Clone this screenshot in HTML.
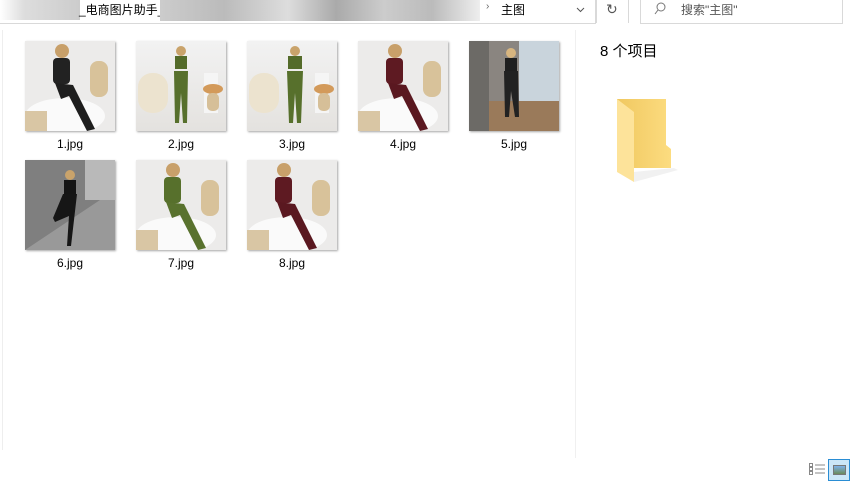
<!DOCTYPE html>
<html><head><meta charset="utf-8"><style>
*{margin:0;padding:0;box-sizing:border-box}
body{width:856px;height:482px;background:#fff;position:relative;overflow:hidden;font-family:"Liberation Sans","Noto Sans CJK SC",sans-serif;font-size:12px;color:#000}
.abs{position:absolute}
.t{position:absolute;width:90px;height:90px;box-shadow:1px 1px 2px rgba(0,0,0,.35);overflow:hidden}
.l{position:absolute;width:90px;text-align:center;font-size:12px}
</style></head><body>
<div class="abs" style="left:-1px;top:-1px;width:597px;height:25px;border:1px solid #d9d9d9"></div>
<div class="abs" style="left:0;top:0;width:80px;height:20px;background:linear-gradient(90deg,#fff,#ddd 30%,#ccc)"></div>
<div class="abs" style="left:79px;top:1px;font-size:12px">_电商图片助手_</div>
<div class="abs" style="left:160px;top:0;width:320px;height:21px;background:linear-gradient(90deg,#ccc,#bbb 20%,#ddd 40%,#aaa 55%,#ccc 70%,#bbb 85%,#eee)"></div>
<div class="abs" style="left:486px;top:1px;color:#666;font-size:10px">›</div>
<div class="abs" style="left:501px;top:1px">主图</div>
<svg class="abs" style="left:576px;top:7px" width="9" height="6"><path d="M1 1l3.5 3.5L8 1" fill="none" stroke="#555"/></svg>
<div class="abs" style="left:596px;top:0;width:1px;height:23px;background:#d9d9d9"></div>
<div class="abs" style="left:606px;top:1px;color:#555;font-size:14px">↻</div>
<div class="abs" style="left:628px;top:0;width:1px;height:23px;background:#d9d9d9"></div>
<div class="abs" style="left:640px;top:-1px;width:203px;height:25px;border:1px solid #d9d9d9"></div>
<svg class="abs" style="left:654px;top:2px" width="12" height="14"><circle cx="7" cy="5" r="4" fill="none" stroke="#777"/><path d="M4 8L1 12" stroke="#777"/></svg>
<div class="abs" style="left:681px;top:1px;color:#555">搜索"主图"</div>
<div class="abs" style="left:2px;top:30px;width:1px;height:420px;background:#eee"></div>
<div class="abs" style="left:575px;top:30px;width:1px;height:428px;background:#f0f0f0"></div>

<svg width="0" height="0" style="position:absolute"><defs>
<linearGradient id="w" x1="0" y1="0" x2="0" y2="1"><stop offset="0" stop-color="#f2f2f2"/><stop offset="1" stop-color="#e4e2df"/></linearGradient>
</defs></svg>

<div class="t" style="left:25px;top:41px"><svg width="90" height="90"><rect width="90" height="90" fill="#ecebea"/><rect x="65" y="20" width="18" height="36" rx="8" fill="#d8c29a"/><ellipse cx="40" cy="75" rx="40" ry="18" fill="#fafafa"/><rect x="0" y="70" width="22" height="20" fill="#d9c6a4"/><circle cx="37" cy="10" r="7" fill="#c8a06a"/><rect x="28" y="17" width="17" height="26" rx="4" fill="#222"/><path d="M30 42 L48 44 L70 88 L62 90 L44 55 L36 58Z" fill="#1e1e1e"/></svg></div>
<div class="l" style="left:25px;top:137px">1.jpg</div>
<div class="t" style="left:136px;top:41px"><svg width="90" height="90"><rect width="90" height="90" fill="url(#w)"/><rect x="2" y="32" width="30" height="40" rx="14" fill="#ece3cf"/><rect x="68" y="32" width="14" height="40" fill="#f5f5f5"/><ellipse cx="77" cy="48" rx="10" ry="5" fill="#d39a5a"/><rect x="71" y="52" width="12" height="18" rx="5" fill="#d6bf98"/><circle cx="45" cy="10" r="5" fill="#c9a36b"/><rect x="39" y="15" width="12" height="13" fill="#546b2a"/><path d="M38 30 L52 30 L51 82 L47 82 L45 52 L43 82 L39 82Z" fill="#57702c"/></svg></div>
<div class="l" style="left:136px;top:137px">2.jpg</div>
<div class="t" style="left:247px;top:41px"><svg width="90" height="90"><rect width="90" height="90" fill="url(#w)"/><rect x="2" y="32" width="30" height="40" rx="14" fill="#ece3cf"/><rect x="68" y="32" width="14" height="40" fill="#f5f5f5"/><ellipse cx="77" cy="48" rx="10" ry="5" fill="#d39a5a"/><rect x="71" y="52" width="12" height="18" rx="5" fill="#d6bf98"/><circle cx="48" cy="10" r="5" fill="#c9a36b"/><rect x="41" y="15" width="14" height="13" fill="#546b2a"/><path d="M40 30 L56 30 L54 82 L50 82 L48 52 L46 82 L42 82Z" fill="#57702c"/></svg></div>
<div class="l" style="left:247px;top:137px">3.jpg</div>
<div class="t" style="left:358px;top:41px"><svg width="90" height="90"><rect width="90" height="90" fill="#ecebea"/><rect x="65" y="20" width="18" height="36" rx="8" fill="#d8c29a"/><ellipse cx="40" cy="75" rx="40" ry="18" fill="#fafafa"/><rect x="0" y="70" width="22" height="20" fill="#d9c6a4"/><circle cx="37" cy="10" r="7" fill="#c8a06a"/><rect x="28" y="17" width="17" height="26" rx="4" fill="#5e1a22"/><path d="M30 42 L48 44 L70 88 L62 90 L44 55 L36 58Z" fill="#5a1820"/></svg></div>
<div class="l" style="left:358px;top:137px">4.jpg</div>
<div class="t" style="left:469px;top:41px"><svg width="90" height="90"><rect width="90" height="90" fill="#8a8580"/><rect x="50" y="0" width="40" height="60" fill="#c9d4dc"/><rect x="0" y="60" width="90" height="30" fill="#9a7a5a"/><rect x="0" y="0" width="20" height="90" fill="#6c6a66"/><circle cx="42" cy="12" r="5" fill="#d7b57f"/><rect x="36" y="17" width="12" height="13" fill="#1f1f1f"/><path d="M35 30 L49 30 L50 76 L46 76 L42 50 L40 76 L36 76Z" fill="#222"/></svg></div>
<div class="l" style="left:469px;top:137px">5.jpg</div>
<div class="t" style="left:25px;top:160px"><svg width="90" height="90"><rect width="90" height="90" fill="#7f7f7f"/><path d="M0 90 L90 30 L90 90Z" fill="#999"/><rect x="60" y="0" width="30" height="40" fill="#b9b9b9"/><circle cx="45" cy="15" r="5" fill="#c9a36b"/><rect x="39" y="20" width="12" height="14" fill="#151515"/><path d="M38 34 L52 34 L46 86 L42 86 L44 56 L30 62 L28 58Z" fill="#161616"/></svg></div>
<div class="l" style="left:25px;top:256px">6.jpg</div>
<div class="t" style="left:136px;top:160px"><svg width="90" height="90"><rect width="90" height="90" fill="#ecebea"/><rect x="65" y="20" width="18" height="36" rx="8" fill="#d8c29a"/><ellipse cx="40" cy="75" rx="40" ry="18" fill="#fafafa"/><rect x="0" y="70" width="22" height="20" fill="#d9c6a4"/><circle cx="37" cy="10" r="7" fill="#c8a06a"/><rect x="28" y="17" width="17" height="26" rx="4" fill="#57702c"/><path d="M30 42 L48 44 L70 88 L62 90 L44 55 L36 58Z" fill="#59722e"/></svg></div>
<div class="l" style="left:136px;top:256px">7.jpg</div>
<div class="t" style="left:247px;top:160px"><svg width="90" height="90"><rect width="90" height="90" fill="#ecebea"/><rect x="65" y="20" width="18" height="36" rx="8" fill="#d8c29a"/><ellipse cx="40" cy="75" rx="40" ry="18" fill="#fafafa"/><rect x="0" y="70" width="22" height="20" fill="#d9c6a4"/><circle cx="37" cy="10" r="7" fill="#c8a06a"/><rect x="28" y="17" width="17" height="26" rx="4" fill="#5e1a22"/><path d="M30 42 L48 44 L70 88 L62 90 L44 55 L36 58Z" fill="#5a1820"/></svg></div>
<div class="l" style="left:247px;top:256px">8.jpg</div>

<div class="abs" style="left:600px;top:40px;font-size:15px">8 个项目</div>
<svg class="abs" style="left:612px;top:96px" width="70" height="90">
<defs><linearGradient id="f" x1="0" y1="0" x2="1" y2="0"><stop offset="0" stop-color="#f0c860"/><stop offset="1" stop-color="#fcdc80"/></linearGradient></defs>
<path d="M5 3 L54 3 L54 49 L59 53 L59 72 L5 72Z" fill="url(#f)"/>
<path d="M5 3 L22 16 L22 86 L5 76Z" fill="#fde39a"/>
<path d="M22 86 L22 76 L62 72 L66 74Z" fill="#e8e8e8" opacity=".6"/>
</svg>

<svg class="abs" style="left:809px;top:462px" width="18" height="14"><g fill="none" stroke="#888"><rect x="0.5" y="1.5" width="3" height="3"/><rect x="0.5" y="5.5" width="3" height="3"/><rect x="0.5" y="9.5" width="3" height="3"/><path d="M6 3h10M6 7h10M6 11h10"/></g></svg>
<div class="abs" style="left:828px;top:459px;width:22px;height:22px;border:1px solid #2a8dd4;background:#cce6f7"></div>
<div class="abs" style="left:833px;top:465px;width:13px;height:10px;border:1px solid #777;background:linear-gradient(#7fb1e8,#6a8a5a)"></div>
</body></html>
